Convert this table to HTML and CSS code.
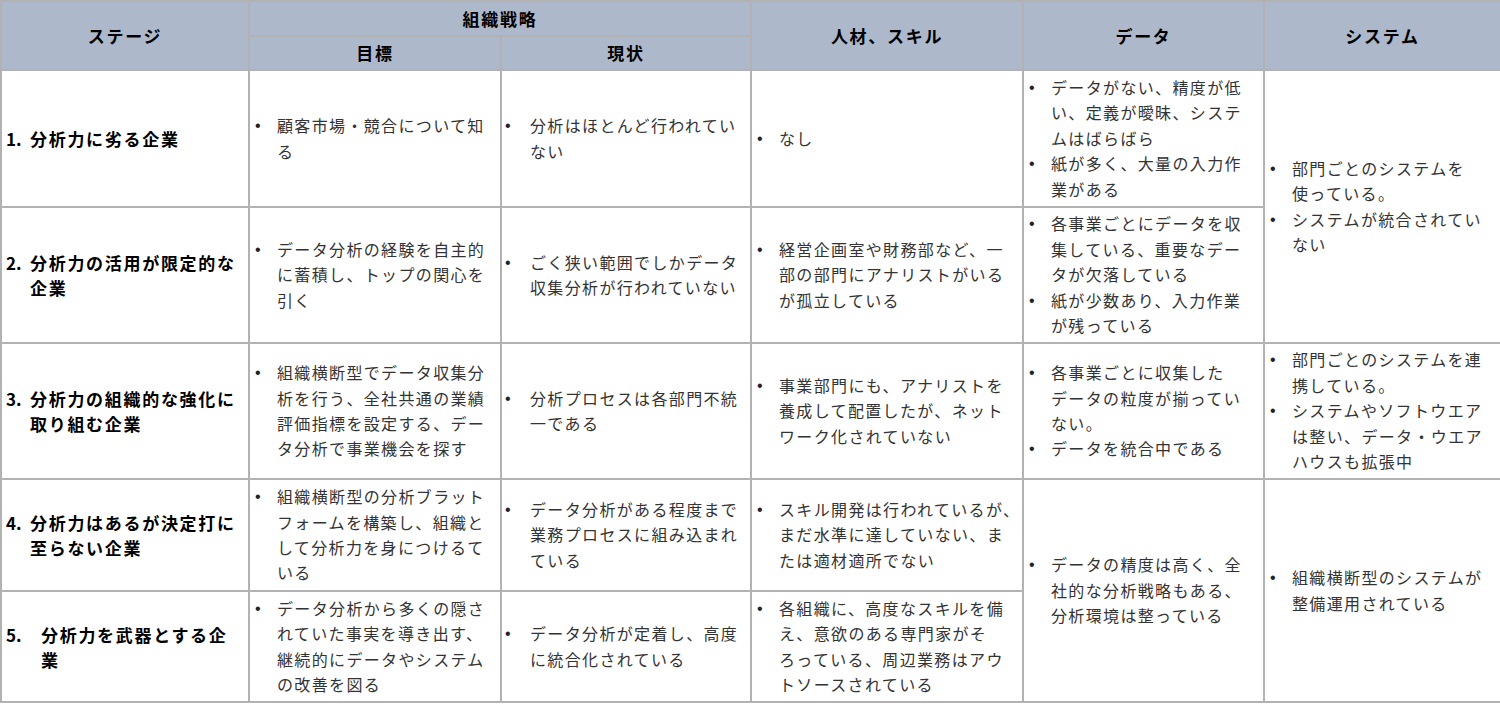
FILE: index.html
```html
<!DOCTYPE html>
<html lang="ja">
<head>
<meta charset="utf-8">
<title>分析力ステージ</title>
<link rel="stylesheet" href="styles.css">
</head>
<body>
<table class="grid">
  <colgroup>
    <col class="c-stage"><col class="c-goal"><col class="c-now"><col class="c-people"><col class="c-data"><col class="c-sys">
  </colgroup>
  <thead>
    <tr class="h1">
      <th rowspan="2">ステージ</th>
      <th colspan="2">組織戦略</th>
      <th rowspan="2">人材、スキル</th>
      <th rowspan="2">データ</th>
      <th rowspan="2">システム</th>
    </tr>
    <tr class="h2">
      <th>目標</th>
      <th>現状</th>
    </tr>
  </thead>
  <tbody>
    <tr class="r1">
      <td class="stage"><div class="st"><span class="num">1.</span><span>分析力に劣る企業</span></div></td>
      <td><ul><li><span>顧客市場・競合について知<br>る</span></li></ul></td>
      <td class="now"><ul><li><span>分析はほとんど行われてい<br>ない</span></li></ul></td>
      <td><ul><li><span>なし</span></li></ul></td>
      <td><ul><li><span>データがない、精度が低<br>い、定義が曖昧、システ<br>ムはばらばら</span></li><li><span>紙が多く、大量の入力作<br>業がある</span></li></ul></td>
      <td rowspan="2"><ul><li><span>部門ごとのシステムを<br>使っている。</span></li><li><span>システムが統合されてい<br>ない</span></li></ul></td>
    </tr>
    <tr class="r2">
      <td class="stage"><div class="st"><span class="num">2.</span><span>分析力の活用が限定的な<br>企業</span></div></td>
      <td><ul><li><span>データ分析の経験を自主的<br>に蓄積し、トップの関心を<br>引く</span></li></ul></td>
      <td class="now"><ul><li><span>ごく狭い範囲でしかデータ<br>収集分析が行われていない</span></li></ul></td>
      <td><ul><li><span>経営企画室や財務部など、一<br>部の部門にアナリストがいる<br>が孤立している</span></li></ul></td>
      <td><ul><li><span>各事業ごとにデータを収<br>集している、重要なデー<br>タが欠落している</span></li><li><span>紙が少数あり、入力作業<br>が残っている</span></li></ul></td>
    </tr>
    <tr class="r3">
      <td class="stage"><div class="st"><span class="num">3.</span><span>分析力の組織的な強化に<br>取り組む企業</span></div></td>
      <td><ul><li><span>組織横断型でデータ収集分<br>析を行う、全社共通の業績<br>評価指標を設定する、デー<br>タ分析で事業機会を探す</span></li></ul></td>
      <td class="now"><ul><li><span>分析プロセスは各部門不統<br>一である</span></li></ul></td>
      <td><ul><li><span>事業部門にも、アナリストを<br>養成して配置したが、ネット<br>ワーク化されていない</span></li></ul></td>
      <td><ul><li><span>各事業ごとに収集した<br>データの粒度が揃ってい<br>ない。</span></li><li><span>データを統合中である</span></li></ul></td>
      <td><ul><li><span>部門ごとのシステムを連<br>携している。</span></li><li><span>システムやソフトウエア<br>は整い、データ・ウエア<br>ハウスも拡張中</span></li></ul></td>
    </tr>
    <tr class="r4">
      <td class="stage"><div class="st"><span class="num">4.</span><span>分析力はあるが決定打に<br>至らない企業</span></div></td>
      <td><ul><li><span>組織横断型の分析ブラット<br>フォームを構築し、組織と<br>して分析力を身につけるて<br>いる</span></li></ul></td>
      <td class="now"><ul><li><span>データ分析がある程度まで<br>業務プロセスに組み込まれ<br>ている</span></li></ul></td>
      <td><ul><li><span>スキル開発は行われているが、<br>まだ水準に達していない、ま<br>たは適材適所でない</span></li></ul></td>
      <td rowspan="2"><ul><li><span>データの精度は高く、全<br>社的な分析戦略もある、<br>分析環境は整っている</span></li></ul></td>
      <td rowspan="2"><ul><li><span>組織横断型のシステムが<br>整備運用されている</span></li></ul></td>
    </tr>
    <tr class="r5">
      <td class="stage"><div class="st"><span class="num wide">5.</span><span>分析力を武器とする企<br>業</span></div></td>
      <td><ul><li><span>データ分析から多くの隠さ<br>れていた事実を導き出す、<br>継続的にデータやシステム<br>の改善を図る</span></li></ul></td>
      <td class="now"><ul><li><span>データ分析が定着し、高度<br>に統合化されている</span></li></ul></td>
      <td><ul><li><span>各組織に、高度なスキルを備<br>え、意欲のある専門家がそ<br>ろっている、周辺業務はアウ<br>トソースされている</span></li></ul></td>
    </tr>
  </tbody>
</table>
</body>
</html>
```
FILE: styles.css
```css
html, body {
  margin: 0;
  padding: 0;
  background: #ffffff;
}

body {
  font-family: "Noto Sans CJK JP", "Noto Sans", sans-serif;
  color: #333333;
}

.grid {
  border-collapse: collapse;
  table-layout: fixed;
  width: 1500px;
}

.c-stage { width: 248px; }
.c-goal { width: 252px; }
.c-now { width: 250px; }
.c-people { width: 272px; }
.c-data { width: 241px; }
.c-sys { width: 237px; }

.grid th,
.grid td {
  border: 2px solid #b2b2b2;
  padding: 0;
  vertical-align: middle;
}

.grid th {
  background: #adb9cb;
  color: #000000;
  font-weight: 700;
  font-size: 17px;
  letter-spacing: 1.7px;
  text-align: center;
  line-height: 22px;
}

.h1 { height: 35px; }
.h2 { height: 34px; }
.r1 { height: 137px; }
.r2 { height: 136px; }
.r3 { height: 136px; }
.r4 { height: 112px; }
.r5 { height: 111px; }

.grid td {
  font-size: 16px;
  letter-spacing: 1.35px;
  line-height: 25.4px;
  white-space: nowrap;
  text-align: left;
}

.grid td.stage {
  color: #000000;
  font-weight: 700;
  font-size: 17px;
  letter-spacing: 1.7px;
  padding-left: 4px;
}

.st {
  display: flex;
  align-items: flex-start;
  line-height: 25px;
}

.num {
  flex: 0 0 24px;
  letter-spacing: 0;
}

.num.wide {
  flex-basis: 35px;
}

.grid ul {
  list-style: none;
  margin: 0;
  padding: 0 0 0 5px;
}

.grid td.now ul {
  padding-left: 3px;
}

.grid li {
  display: flex;
  align-items: flex-start;
}

.grid li::before {
  content: "•";
  flex: 0 0 22px;
  letter-spacing: 0;
  font-family: "Liberation Sans", sans-serif;
  font-size: 16px;
  color: #222222;
}

.grid td.now li::before {
  flex-basis: 25px;
}
```
